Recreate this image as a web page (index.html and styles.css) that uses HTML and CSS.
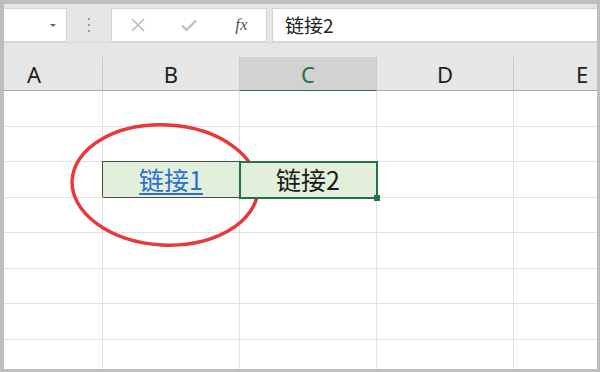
FILE: index.html
```html
<!DOCTYPE html>
<html lang="zh-CN">
<head>
  <meta charset="UTF-8" />
  <title>链接</title>
  <link rel="stylesheet" href="styles.css">
</head>
<body>
  <div class="frame">
    <div class="window">
      <div class="toolbar">
        <div class="namebox"><span class="caret"></span></div>
        <div class="dots"><i></i><i></i><i></i></div>
        <div class="fxbox">
          <span class="fxbtn">
            <svg width="14" height="14" viewBox="0 0 14 14"><path d="M1 1 L13 13 M13 1 L1 13" stroke="#bcbcbc" stroke-width="1.6" fill="none"/></svg>
          </span>
          <span class="fxbtn">
            <svg width="16" height="13" viewBox="0 0 16 13"><path d="M1 6.5 L5.5 11 L15 1.5" stroke="#bcbcbc" stroke-width="2.2" fill="none"/></svg>
          </span>
          <span class="fxbtn fx">fx</span>
        </div>
        <div class="formula">链接2</div>
      </div>

      <div class="sheet">
        <div class="colhead">A</div>
        <div class="colhead">B</div>
        <div class="colhead active">C</div>
        <div class="colhead">D</div>
        <div class="colhead">E</div>

        <div class="cell"></div><div class="cell"></div><div class="cell"></div><div class="cell"></div><div class="cell"></div>
        <div class="cell"></div><div class="cell"></div><div class="cell"></div><div class="cell"></div><div class="cell"></div>
        <div class="cell"></div>
        <div class="cell filled linked"><a href="#">链接1</a></div>
        <div class="cell filled selected">链接2<span class="handle"></span></div>
        <div class="cell"></div><div class="cell"></div>
        <div class="cell"></div><div class="cell"></div><div class="cell"></div><div class="cell"></div><div class="cell"></div>
        <div class="cell"></div><div class="cell"></div><div class="cell"></div><div class="cell"></div><div class="cell"></div>
        <div class="cell"></div><div class="cell"></div><div class="cell"></div><div class="cell"></div><div class="cell"></div>
        <div class="cell"></div><div class="cell"></div><div class="cell"></div><div class="cell"></div><div class="cell"></div>
        <div class="cell"></div><div class="cell"></div><div class="cell"></div><div class="cell"></div><div class="cell"></div>
      </div>
    </div>

    <!-- красный круг вокруг ссылки -->
    <svg class="mark" width="600" height="372" viewBox="0 0 600 372">
      <ellipse cx="165" cy="185" rx="93" ry="60" transform="rotate(3 165 185)" fill="none" stroke="#e8383a" stroke-width="3.5"/>
    </svg>
  </div>
</body>
</html>
```

FILE: styles.css
```css
* {
  box-sizing: border-box;
}

html, body {
  margin: 0;
  padding: 0;
  background: #bebebe;
  font-family: "Noto Sans", "Noto Sans CJK SC", sans-serif;
}

.frame {
  position: relative;
  width: 600px;
  height: 372px;
  padding: 4px 3px 3px 4px;
}

.window {
  height: 100%;
  background: #fff;
  overflow: hidden;
}

.toolbar {
  display: flex;
  height: 39px;
  padding-top: 4px;
  background: #e6e6e6;
  border-bottom: 1px solid #d9d9d9;
}

.namebox {
  position: relative;
  width: 63px;
  height: 34px;
  background: #fff;
  border: 1px solid #d4d4d4;
  border-left: none;
}

.caret {
  position: absolute;
  right: 10px;
  top: 15px;
  border-left: 3px solid transparent;
  border-right: 3px solid transparent;
  border-top: 3px solid #666;
}

.dots {
  width: 44px;
  display: flex;
  flex-direction: column;
  align-items: center;
  justify-content: center;
  gap: 4px;
}

.dots i {
  width: 2px;
  height: 2px;
  background: #9a9a9a;
}

.fxbox {
  display: flex;
  width: 156px;
  height: 34px;
  background: #fff;
  border: 1px solid #d4d4d4;
}

.fxbtn {
  width: 52px;
  display: flex;
  align-items: center;
  justify-content: center;
}

.fx {
  font-family: "Liberation Serif", serif;
  font-style: italic;
  font-size: 17px;
  color: #555;
  padding-left: 2px;
}

.formula {
  flex: 1;
  height: 34px;
  margin-left: 5px;
  padding-left: 12px;
  background: #fff;
  border: 1px solid #d4d4d4;
  border-right: none;
  font-family: "Noto Sans CJK SC", sans-serif;
  font-size: 19px;
  line-height: 31px;
  color: #222;
}

.sheet {
  display: grid;
  grid-template-columns: repeat(5, 137px);
  grid-template-rows: 48px;
  grid-auto-rows: 35.5px;
  margin-left: -38px;
  background: #e6e6e6;
}

.colhead {
  align-self: end;
  height: 34px;
  border-right: 1px solid #c9c9c9;
  border-bottom: 1px solid #ababab;
  text-align: center;
  font-size: 22px;
  line-height: 34px;
  color: #222;
}

.colhead.active {
  background: #d2d2d2;
  color: #217346;
  border-bottom: 2px solid #217346;
  margin-bottom: -1px;
  height: 35px;
}

.cell {
  background: #fff;
  border-right: 1px solid #e1e1e1;
  border-bottom: 1px solid #e1e1e1;
  text-align: center;
  font-family: "Noto Sans CJK SC", sans-serif;
  font-size: 25px;
  line-height: 35px;
  color: #1a1a1a;
}

.cell.filled {
  background: #e2efda;
}

.linked {
  border-right-color: #4a4a4a;
  border-bottom-color: #4a4a4a;
  box-shadow: -1px -1px 0 #4a4a4a;
}

.linked a {
  color: #2a6fd1;
  text-decoration: underline;
  text-decoration-thickness: 2px;
  text-underline-offset: 3px;
}

.selected {
  position: relative;
  z-index: 1;
  outline: 2px solid #217346;
  outline-offset: -1px;
}

.handle {
  position: absolute;
  right: -4px;
  bottom: -4px;
  width: 6px;
  height: 6px;
  background: #217346;
}

.mark {
  position: absolute;
  left: 0;
  top: 0;
  pointer-events: none;
}
```
